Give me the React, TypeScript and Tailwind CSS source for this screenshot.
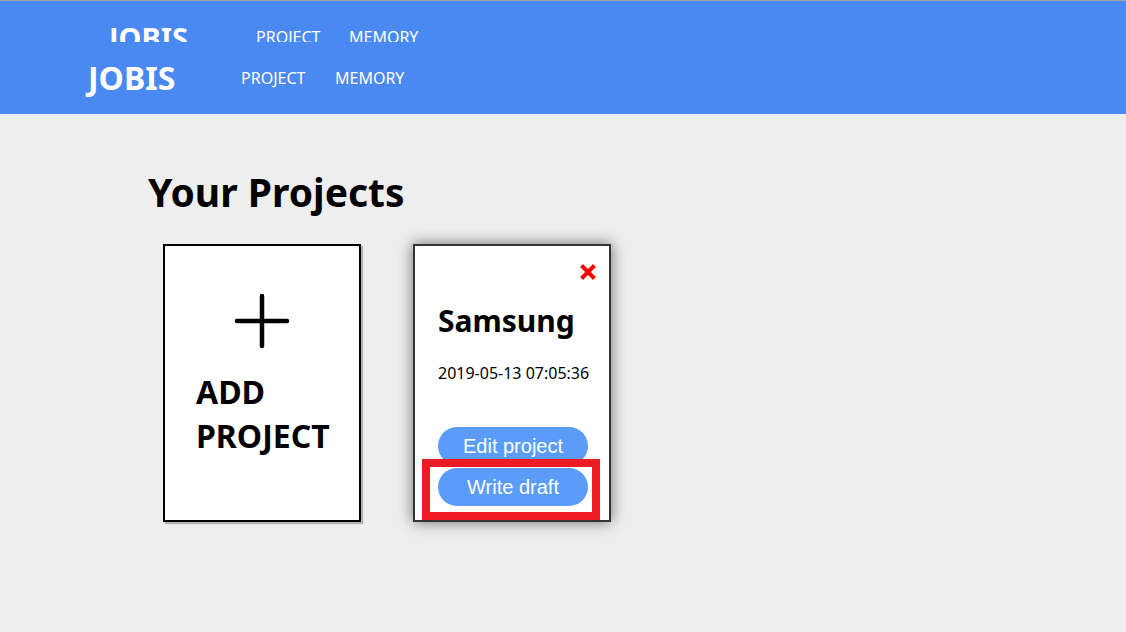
const navFont = { fontFamily: '"Noto Sans", "Open Sans", sans-serif' };

function NavRow({ ghost = false }: { ghost?: boolean }) {
  return (
    <div
      className={
        ghost
          ? "flex h-[72px] shrink-0 items-center pl-[109px] text-white"
          : "flex h-[72px] shrink-0 items-center pl-[88px] text-white"
      }
    >
      <span
        className={
          ghost
            ? "w-[147px] text-[29px] font-bold leading-none"
            : "w-[153px] text-[32px] font-bold leading-none"
        }
      >
        JOBIS
      </span>
      <span className={ghost ? "w-[93px] text-base" : "w-[94px] text-base"}>PROJECT</span>
      <span className="text-base">MEMORY</span>
    </div>
  );
}

function Header() {
  return (
    <header className="flex flex-col border-t border-[#a3a3a3] bg-[#4a89f1]">
      <div className="h-[41px] overflow-hidden">
        <NavRow ghost />
      </div>
      <NavRow />
    </header>
  );
}

function PlusIcon() {
  return (
    <svg width="56" height="56" viewBox="0 0 56 56" aria-hidden="true">
      <path d="M28 3v50M3 28h50" stroke="#000" strokeWidth="4.5" strokeLinecap="round" />
    </svg>
  );
}

function CloseIcon() {
  return (
    <svg width="18" height="18" viewBox="0 0 18 18" aria-hidden="true">
      <path d="M2.5 2.5l13 13M15.5 2.5l-13 13" stroke="#ff0000" strokeWidth="4" />
    </svg>
  );
}

function AddCard() {
  return (
    <div className="flex h-[278px] w-[198px] flex-col border-2 border-black bg-white shadow-[2px_2px_1px_rgba(0,0,0,0.25)]">
      <div className="mt-[47px] flex justify-center">
        <PlusIcon />
      </div>
      <div className="mt-[21px] pl-[31px] text-[32px] font-bold leading-[44px] text-black">
        ADD
        <br />
        PROJECT
      </div>
    </div>
  );
}

function ProjectCard({ name, date }: { name: string; date: string }) {
  const btn =
    "flex h-[38px] w-[150px] items-center justify-center rounded-full bg-[#5b9cf8] text-[20px] text-white";
  return (
    <div className="relative flex h-[278px] w-[198px] flex-col border-2 border-[#333] bg-white pl-[23px] shadow-[0_0_14px_rgba(0,0,0,0.55)]">
      <div className="mt-[17px] flex justify-end pr-[12px]">
        <CloseIcon />
      </div>
      <h3 className="mt-[19px] text-[30px] font-bold leading-[41px] text-black">{name}</h3>
      <p className="mt-[21px] text-base leading-[22px] text-black">{date}</p>
      <div className="mt-[43px] flex flex-col gap-[3px]" style={{ fontFamily: '"Liberation Sans", Arial, sans-serif' }}>
        <button className={btn}>Edit project</button>
        <button className={btn}>Write draft</button>
      </div>
      <div className="pointer-events-none absolute left-[7px] top-[213px] h-[61px] w-[178px] border-[8px] border-[#ed1c24]" />
    </div>
  );
}

export default function App() {
  return (
    <div className="min-h-[632px] bg-[#eeeeee]" style={navFont}>
      <Header />
      <main className="pl-[148px] pt-[51px]">
        <h1 className="text-[39px] font-bold leading-[54px] text-black">Your Projects</h1>
        <div className="mt-[25px] flex gap-[52px] pl-[15px]">
          <AddCard />
          <ProjectCard name="Samsung" date="2019-05-13 07:05:36" />
        </div>
      </main>
    </div>
  );
}
